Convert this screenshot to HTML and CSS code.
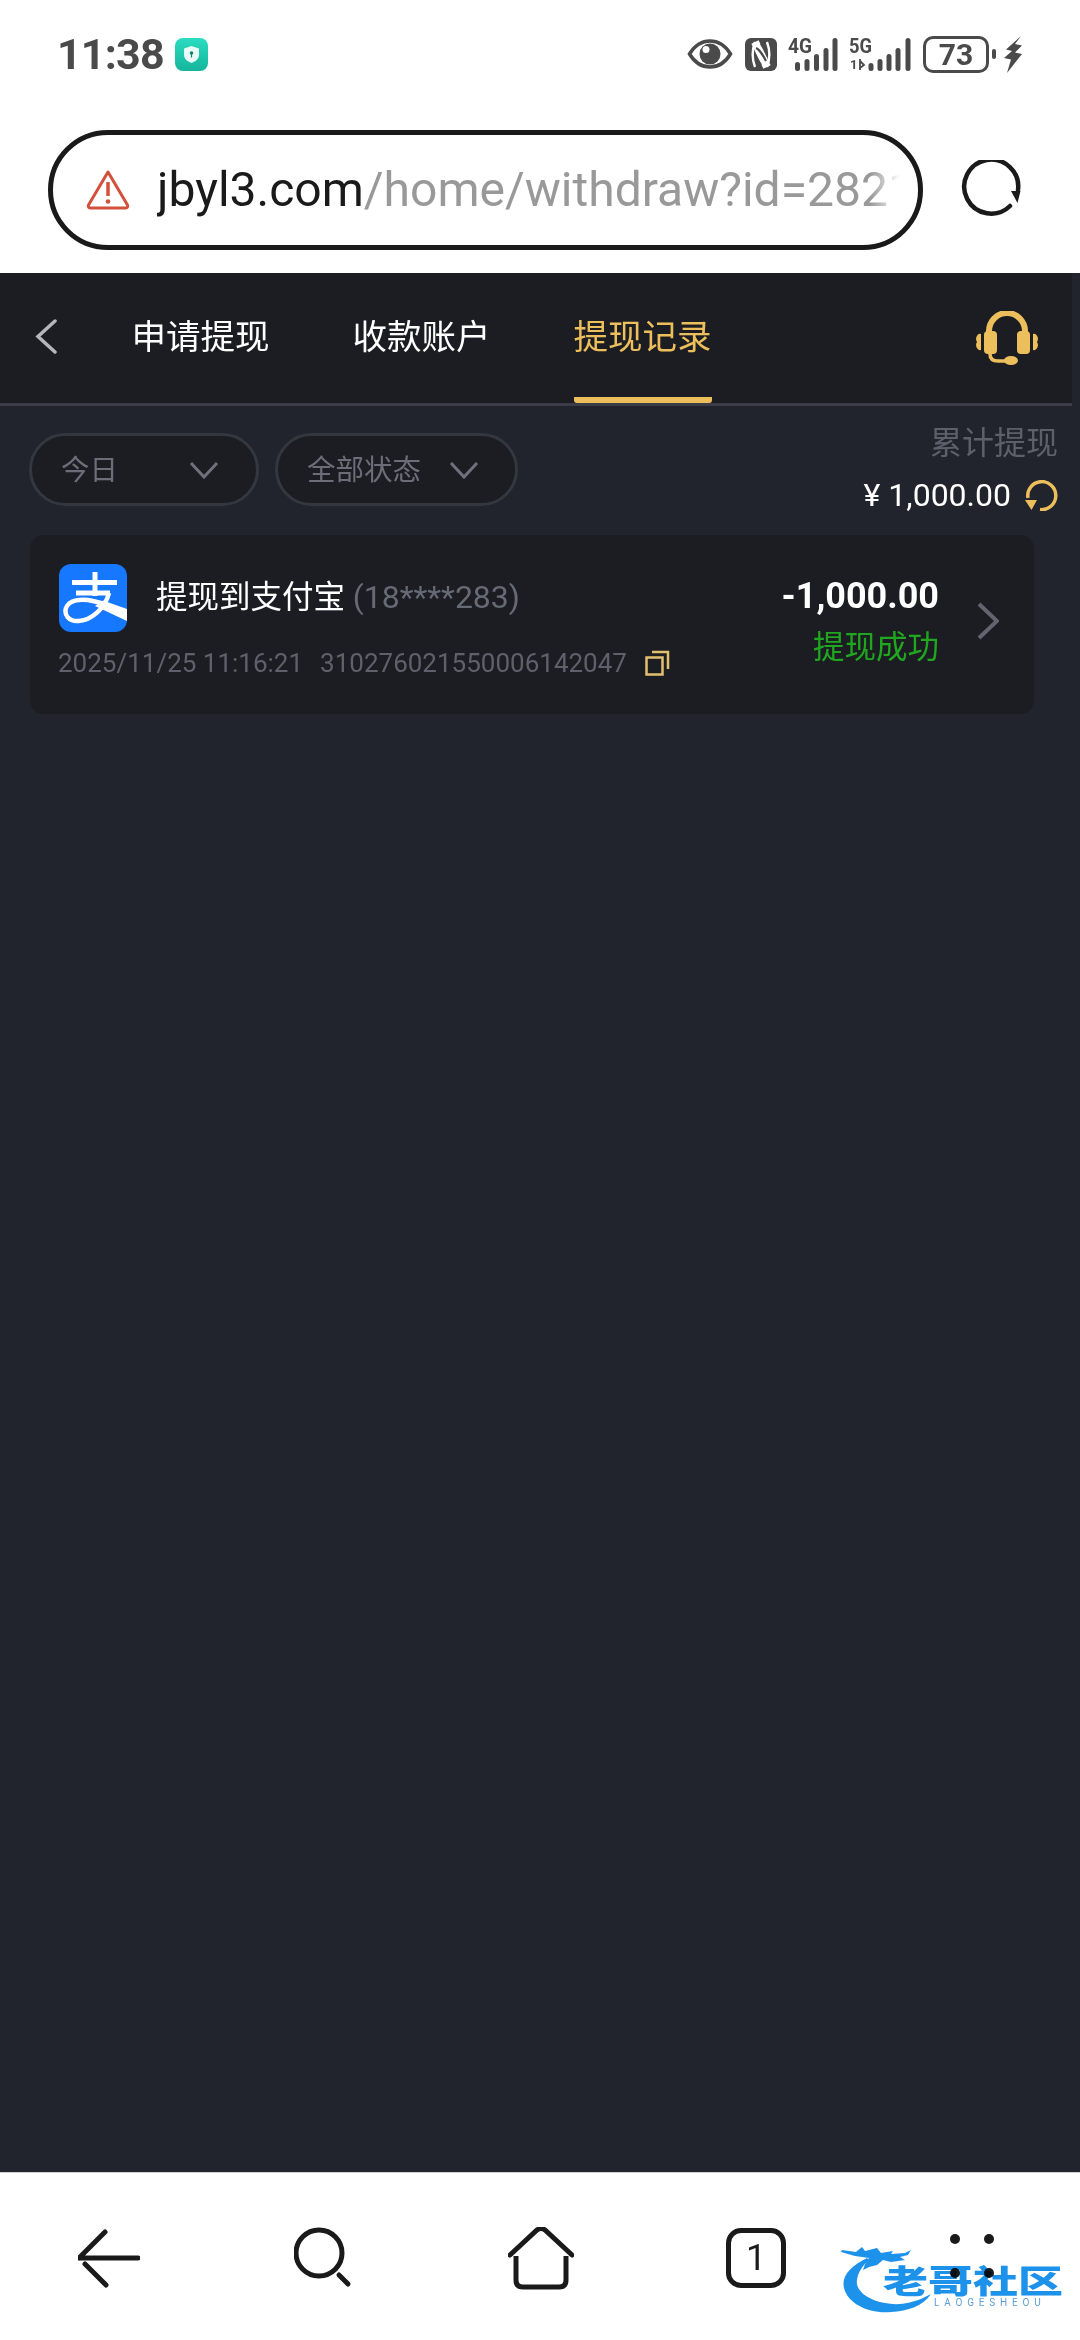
FILE: index.html
```html
<!DOCTYPE html>
<html lang="zh-CN">
  <head>
    <meta charset="utf-8" />
    <meta name="viewport" content="width=device-width, initial-scale=1" />
    <title>提现记录</title>
    <link rel="stylesheet" href="styles.css">
  </head>
  <body>
    <!--Status bar-->
    <div class="status-bar">
      <div class="status-left">
        <span class="status-time">11:38</span>
        <svg class="status-app" width="33" height="33" viewBox="0 0 33 33">
          <defs>
            <linearGradient id="appfill" x1="0" y1="0" x2="0" y2="1">
              <stop offset="0" stop-color="#2bdcc0"></stop>
              <stop offset="1" stop-color="#14b59c"></stop>
            </linearGradient>
          </defs>
          <rect width="33" height="33" rx="8" fill="url(#appfill)"></rect>
          <path d="M16.5 8l7.5 2.600v6c0 4.200-3 7-7.500 8.400-4.500-1.400-7.500-4.200-7.500-8.400v-6z" fill="#e8fbf7"></path>
          <circle cx="16.500" cy="15" r="1.800" fill="#17806f"></circle>
          <path d="M16.500 15v4.500" stroke="#17806f" stroke-width="1.200"></path>
        </svg>
      </div>
      <div class="status-right">
        <svg class="icon-eye" width="46" height="32" viewBox="0 0 46 32">
          <path d="M2.500 16C8 7 15 3 23 3s15 4 20.500 13C38 25 31 29 23 29S8 25 2.500 16z" fill="none" stroke="#4a4a4a" stroke-width="3.500"></path>
          <circle cx="23" cy="16" r="10.500" fill="#4a4a4a"></circle>
          <circle cx="19" cy="11.500" r="3.500" fill="#fff"></circle>
        </svg>
        <svg class="icon-nfc" width="32" height="33" viewBox="0 0 32 33">
          <rect width="32" height="33" rx="6" fill="#4a4a4a"></rect>
          <path d="M10 4C7 12 7 21 10 29M22 4C25 12 25 21 22 29" stroke="#fff" stroke-width="2.400" fill="none"></path>
          <path d="M10 4L22 29" stroke="#fff" stroke-width="8" fill="none"></path>
          <path d="M11 10c3 1 8 9 10 13M11 20l5 7M21 13l-5-7" stroke="#4a4a4a" stroke-width="2.200" fill="none"></path>
        </svg>
        <svg class="icon-signal" width="50" height="34" viewBox="0 0 50 34">
          <text class="signal-text" x="0" y="16" textLength="24" lengthAdjust="spacingAndGlyphs">4G</text>
          <rect x="7" y="25" width="5" height="9" rx="2.500"></rect>
          <rect x="16.500" y="22" width="5" height="12" rx="2.500"></rect>
          <rect x="26" y="17" width="5" height="17" rx="2.500"></rect>
          <rect x="35.500" y="11" width="5" height="23" rx="2.500"></rect>
          <rect x="44.500" y="1" width="5" height="33" rx="2.500"></rect>
        </svg>
        <svg class="icon-signal" width="62" height="34" viewBox="0 0 62 34">
          <text class="signal-text" x="0" y="16" textLength="23" lengthAdjust="spacingAndGlyphs">5G</text>
          <text class="signal-sub" x="1" y="32">1</text>
          <path d="M11 22v11M11 24l4 4-4 3" stroke="#4a4a4a" stroke-width="1.800" fill="none"></path>
          <rect x="19.500" y="26" width="5" height="8" rx="2.500"></rect>
          <rect x="28.500" y="22" width="5" height="12" rx="2.500"></rect>
          <rect x="37.500" y="17" width="5" height="17" rx="2.500"></rect>
          <rect x="46.500" y="11" width="5" height="23" rx="2.500"></rect>
          <rect x="56.500" y="1" width="5" height="33" rx="2.500"></rect>
        </svg>
        <div class="battery">
          <span class="battery-level">73</span>
        </div>
        <span class="battery-nub"></span>
        <svg class="icon-bolt" width="18" height="37" viewBox="0 0 18 37">
          <path d="M17 0L2 13.500l6 1.500-8 7 7 1.500L3 37l15-19-7-1.500 7-7-7-1.500z" fill="#4a4a4a"></path>
        </svg>
      </div>
    </div>

    <!--Address bar-->
    <div class="url-row">
      <div class="url-bar">
        <svg class="url-warning" width="44" height="41" viewBox="0 0 44 41">
          <path d="M22 3L2.500 36a2 2 0 0 0 1.700 3h35.600a2 2 0 0 0 1.700-3z" fill="none" stroke="#d2513c" stroke-width="3" stroke-linejoin="round"></path>
          <path d="M22 13v14" stroke="#d2513c" stroke-width="3.500"></path>
          <circle cx="22" cy="32.500" r="2.300" fill="#d2513c"></circle>
        </svg>
        <div class="url-text"><span class="url-host">jbyl3.com</span>/home/withdraw?id=2821</div>
      </div>
      <svg class="url-reload" width="60" height="60" viewBox="0 0 60 60">
        <path d="M49 46A27 27 0 1 1 57 30" fill="none" stroke="#1a1a1a" stroke-width="4.500" stroke-linecap="round"></path>
        <path d="M50 31h9.500l-3 12z" fill="#1a1a1a"></path>
      </svg>
    </div>

    <!--Page-->
    <div class="page">
      <div class="tab-bar">
        <svg class="tab-back" width="22" height="35" viewBox="0 0 22 35">
          <path d="M20 2L3 17.500 20 33" fill="none" stroke="#b4b6bb" stroke-width="3.500" stroke-linecap="round"></path>
        </svg>
        <div class="tab">申请提现</div>
        <div class="tab">收款账户</div>
        <div class="tab tab-active">提现记录</div>
        <svg class="tab-support" width="62" height="54" viewBox="0 0 62 54">
          <path d="M13 26V20a18 18 0 0 1 36 0v6" fill="none" stroke="#ecbf5c" stroke-width="6"></path>
          <rect x="8" y="20" width="13" height="23" rx="4" fill="#ecbf5c"></rect>
          <rect x="41" y="20" width="13" height="23" rx="4" fill="#ecbf5c"></rect>
          <path d="M1 31a4 5 0 0 1 4-8v16a4 5 0 0 1-4-8zM61 31a4 5 0 0 0-4-8v16a4 5 0 0 0 4-8z" fill="#ecbf5c"></path>
          <path d="M14 43c0 5 3 7 8 7h8" fill="none" stroke="#ecbf5c" stroke-width="3.500"></path>
          <ellipse cx="35" cy="49.500" rx="7" ry="4.500" fill="#ecbf5c"></ellipse>
        </svg>
      </div>

      <div class="filter-row">
        <div class="filters">
          <div class="filter filter-date">
            <span class="filter-text">今日</span>
            <svg width="30" height="18" viewBox="0 0 30 18">
              <path d="M2 2l13 14L28 2" fill="none" stroke="#6f727c" stroke-width="3"></path>
            </svg>
          </div>
          <div class="filter filter-state">
            <span class="filter-text">全部状态</span>
            <svg width="30" height="18" viewBox="0 0 30 18">
              <path d="M2 2l13 14L28 2" fill="none" stroke="#6f727c" stroke-width="3"></path>
            </svg>
          </div>
        </div>
        <div class="summary">
          <div class="summary-label">累计提现</div>
          <div class="summary-value">
            <span>¥ 1,000.00</span>
            <svg width="33" height="31" viewBox="0 0 33 31">
              <path d="M3 18A14 14 0 1 1 15 29.500" fill="none" stroke="#ecbf5c" stroke-width="3.500"></path>
              <path d="M0 20h12l-5.500 10z" fill="#ecbf5c"></path>
            </svg>
          </div>
        </div>
      </div>

      <div class="record">
        <div class="record-main">
          <div class="record-title-row">
            <svg class="record-logo" width="68" height="68" viewBox="0 0 68 68">
              <rect width="68" height="68" rx="12" fill="#1677ff"></rect>
              <path d="M13 18.500h45M36 8v24M17 29h34" fill="none" stroke="#fff" stroke-width="5"></path>
              <path d="M50 29C46 45 32 56 20 57 9 58 5 50 7 44c3-8 15-10 27-7 10 2 22 7 34 13" fill="none" stroke="#fff" stroke-width="4.500"></path>
              <path d="M44 36.500L68 45v12L36 42z" fill="#fff"></path>
            </svg>
            <div class="record-title">提现到支付宝 <span class="record-account">(18****283)</span></div>
          </div>
          <div class="record-meta">
            <span class="record-date">2025/11/25 11:16:21</span>
            <span class="record-no">310276021550006142047</span>
            <svg class="record-copy" width="25" height="26" viewBox="0 0 25 26">
              <rect x="1.500" y="7.500" width="16" height="17" fill="none" stroke="#e3c070" stroke-width="2.500"></rect>
              <path d="M7 2h16v17" fill="none" stroke="#e3c070" stroke-width="2.500"></path>
            </svg>
          </div>
        </div>
        <div class="record-side">
          <div class="record-amount">-1,000.00</div>
          <div class="record-state">提现成功</div>
        </div>
        <svg class="record-arrow" width="22" height="38" viewBox="0 0 22 38">
          <path d="M2 2l18 17L2 36" fill="none" stroke="#62656f" stroke-width="4"></path>
        </svg>
      </div>
    </div>

    <!--Browser toolbar-->
    <div class="toolbar">
      <svg width="62" height="64" viewBox="0 0 62 64">
        <path d="M1 31L27 5M3 31h57M7 37l21 21" fill="none" stroke="#1a1a1a" stroke-width="5" stroke-linecap="round"></path>
      </svg>
      <svg width="58" height="64" viewBox="0 0 58 64">
        <circle cx="25" cy="26" r="23" fill="none" stroke="#1a1a1a" stroke-width="5"></circle>
        <path d="M45 48l9 9" fill="none" stroke="#1a1a1a" stroke-width="5" stroke-linecap="round"></path>
      </svg>
      <svg width="66" height="64" viewBox="0 0 66 64">
        <path d="M2 28L29 3q4-3 8 0l27 25" fill="none" stroke="#1a1a1a" stroke-width="5" stroke-linecap="round"></path>
        <path d="M8 29v24q0 7 7 7h36q7 0 7-7V29" fill="none" stroke="#1a1a1a" stroke-width="5"></path>
      </svg>
      <div class="toolbar-tabs">1</div>
      <div class="toolbar-more">
        <span></span><span></span><span></span><span></span>
      </div>
      <div class="watermark">
        <svg class="watermark-logo" width="100" height="70" viewBox="0 0 100 70">
          <path d="M24 12C8 20-2 30 1 42c4 16 25 26 47 24 17-1 32-6 40-18-16 9-32 12-46 9C24 54 12 44 14 34c1-8 6-15 12-20z" fill="#1d92ea"></path>
          <path d="M-1 4l14 2 6-5 3 4 12-3 4 5 12-2-2 3 14-1 6-3-3 5-8 2 5 3-14 2-8-2-6 5-8 2-6 3 2-6 4-6-14-2-14-4z" fill="#1d92ea"></path>
        </svg>
        <div class="watermark-name">老哥社区</div>
        <div class="watermark-sub">LAOGESHEOU</div>
      </div>
    </div>
  </body>
</html>
```

FILE: styles.css
```css
* {
  box-sizing: border-box;
}
html,
body {
  margin: 0;
  height: 2340px;
}
body {
  display: flex;
  flex-direction: column;
  overflow: hidden;
  background-color: #fff;
  font-family: Roboto, "Noto Sans CJK SC", sans-serif;
}

.status-bar {
  display: flex;
  justify-content: space-between;
  align-items: center;
  height: 108px;
  padding: 0 58px 0 57px;
  color: #4a4a4a;
}
.status-left {
  display: flex;
  align-items: center;
  gap: 11px;
}
.status-time {
  font-size: 43px;
  font-weight: 700;
  letter-spacing: -0.8px;
}
.status-right {
  display: flex;
  align-items: center;
}
.icon-nfc {
  margin-left: 12px;
}
.icon-signal {
  margin-left: 11px;
  overflow: visible;
  fill: #4a4a4a;
}
.signal-text {
  font-size: 21px;
  font-weight: 700;
}
.signal-sub {
  font-size: 13px;
  font-weight: 700;
}
.battery {
  display: flex;
  justify-content: center;
  align-items: center;
  width: 66px;
  height: 37px;
  margin-left: 12px;
  border: 3px solid #4a4a4a;
  border-radius: 10px;
}
.battery-level {
  font-size: 30px;
  font-weight: 700;
}
.battery-nub {
  width: 4px;
  height: 10px;
  margin-left: 3px;
  border-radius: 2px;
  background-color: #4a4a4a;
}
.icon-bolt {
  margin-left: 8px;
}

.url-row {
  display: flex;
  align-items: center;
  gap: 38px;
  height: 165px;
  padding: 0 0 2px 48px;
}
.url-bar {
  display: flex;
  align-items: center;
  gap: 27px;
  width: 875px;
  height: 120px;
  padding: 0 18px 0 33px;
  border: 5px solid #1a1a1a;
  border-radius: 60px;
}
.url-text {
  flex: 1;
  overflow: hidden;
  white-space: nowrap;
  font-size: 48px;
  color: #999;
  -webkit-mask-image: linear-gradient(to right, #000 96%, transparent);
  mask-image: linear-gradient(to right, #000 96%, transparent);
}
.url-host {
  color: #1a1a1a;
}

.page {
  flex: 1;
  background-color: #21242c;
}
.tab-bar {
  display: flex;
  align-items: stretch;
  height: 133px;
  margin-right: 8px;
  padding-left: 35px;
  border-bottom: 3px solid #3a3d47;
  background-color: #1c1d22;
  color: #fff;
  font-size: 34.500px;
}
.tab-back {
  align-self: center;
  margin-right: 74.500px;
  margin-bottom: 4px;
}
.tab {
  display: flex;
  align-items: center;
  margin-right: 83px;
  padding-bottom: 2px;
  border-bottom: 6px solid transparent;
}
.tab-active {
  border-radius: 0 0 3px 3px;
  border-bottom-color: #ecbf5c;
  color: #ecbf5c;
}
.tab-support {
  align-self: center;
  margin-left: auto;
  margin-right: 34px;
}

.filter-row {
  display: flex;
  justify-content: space-between;
  padding: 19px 22px 22px 29px;
}
.filters {
  display: flex;
  gap: 16px;
  padding-top: 8px;
}
.filter {
  display: flex;
  justify-content: space-between;
  align-items: center;
  height: 73px;
  border: 3px solid #333740;
  border-radius: 37px;
  background-color: #1c1d22;
  color: #6b6e78;
  font-size: 28.500px;
}
.filter-text {
  margin-bottom: 4px;
}
.filter-date {
  width: 230px;
  padding: 0 37px 0 29px;
}
.filter-state {
  width: 243px;
  padding: 0 36px 0 29px;
}
.summary {
  text-align: right;
}
.summary-label {
  height: 36px;
  margin-bottom: 16px;
  color: #5d606b;
  font-size: 32px;
  line-height: 36px;
}
.summary-value {
  display: flex;
  justify-content: flex-end;
  align-items: center;
  gap: 14px;
  height: 36px;
  color: #fff;
  font-size: 32px;
}

.record {
  display: flex;
  align-items: center;
  height: 179px;
  margin: 0 46px 0 30px;
  padding: 0 35px 6px 29px;
  border-radius: 14px;
  background-color: #1c1d22;
}
.record-main {
  flex: 1;
}
.record-title-row {
  display: flex;
  align-items: center;
  gap: 29px;
}
.record-title {
  margin-bottom: 9px;
  color: #fff;
  font-size: 31.500px;
}
.record-account {
  color: #666a75;
  font-size: 32px;
}
.record-meta {
  display: flex;
  align-items: center;
  height: 32px;
  margin-top: 15px;
  margin-left: -1px;
  color: #5e616b;
  font-size: 26px;
}
.record-no {
  margin-left: 17px;
}
.record-copy {
  margin-left: 18px;
}
.record-side {
  margin-right: 38px;
  text-align: right;
}
.record-amount {
  color: #fff;
  font-size: 36px;
  font-weight: 700;
  line-height: 40px;
}
.record-state {
  margin-top: 12px;
  color: #1fa81f;
  font-size: 31.500px;
  line-height: 40px;
}
.record-arrow {
  margin-top: -2px;
}

.toolbar {
  position: relative;
  display: grid;
  grid-template-columns: 216px 214px 218px 224px auto;
  align-items: start;
  height: 168px;
  padding: 54px 0 0 78px;
  border-top: 1px solid #d0d0d0;
  background-color: #fff;
}
.toolbar-tabs {
  display: flex;
  justify-content: center;
  align-items: center;
  width: 60px;
  height: 60px;
  margin-top: 1px;
  border: 5px solid #1a1a1a;
  border-radius: 15px;
  color: #1a1a1a;
  font-size: 36px;
}
.toolbar-more {
  display: grid;
  grid-template-columns: 10px 10px;
  gap: 24px;
  padding: 7px 0 0 0;
}
.toolbar-more span {
  width: 10px;
  height: 10px;
  border-radius: 50%;
  background-color: #1a1a1a;
}
.watermark {
  position: absolute;
  top: 73px;
  left: 843px;
  width: 222px;
  height: 70px;
  color: #1d92ea;
  mix-blend-mode: multiply;
}
.watermark-logo {
  position: absolute;
  top: 0;
  left: 0;
  overflow: visible;
}
.watermark-name {
  position: absolute;
  top: 14px;
  left: 40px;
  font-size: 45px;
  font-weight: 900;
  line-height: 44px;
  white-space: nowrap;
  transform: scaleY(0.72);
}
.watermark-sub {
  position: absolute;
  top: 52px;
  left: 91px;
  color: #5d9fd8;
  font-size: 10px;
  letter-spacing: 4.800px;
  line-height: 10px;
}
```
